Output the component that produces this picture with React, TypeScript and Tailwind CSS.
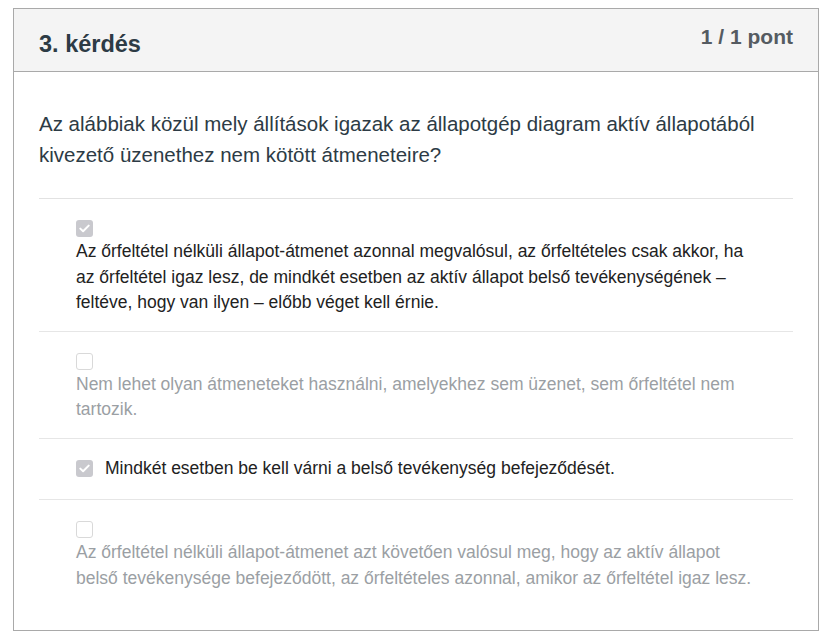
const options = [
  {
    text: 'Az őrfeltétel nélküli állapot-átmenet azonnal megvalósul, az őrfeltételes csak akkor, ha az őrfeltétel igaz lesz, de mindkét esetben az aktív állapot belső tevékenységének – feltéve, hogy van ilyen – előbb véget kell érnie.',
    checked: true,
    inline: false,
  },
  {
    text: 'Nem lehet olyan átmeneteket használni, amelyekhez sem üzenet, sem őrfeltétel nem tartozik.',
    checked: false,
    inline: false,
  },
  {
    text: 'Mindkét esetben be kell várni a belső tevékenység befejeződését.',
    checked: true,
    inline: true,
  },
  {
    text: 'Az őrfeltétel nélküli állapot-átmenet azt követően valósul meg, hogy az aktív állapot belső tevékenysége befejeződött, az őrfeltételes azonnal, amikor az őrfeltétel igaz lesz.',
    checked: false,
    inline: false,
  },
];

function Box({ checked }: { checked: boolean }) {
  if (checked) {
    return (
      <span className="flex h-[17px] w-[17px] shrink-0 items-center justify-center rounded-[3px] bg-[#c9c9ce]">
        <svg width="11" height="9" viewBox="0 0 11 9" fill="none">
          <path d="M1.3 4.6 L4.1 7.3 L9.7 1.6" stroke="#fff" strokeWidth="2" strokeLinecap="round" strokeLinejoin="round" />
        </svg>
      </span>
    );
  }
  return <span className="block h-[17px] w-[17px] shrink-0 rounded-[3px] border border-[#d9d9d9] bg-white" />;
}

export default function App() {
  return (
    <div className="min-h-screen bg-white pl-[13px] pt-[8px] font-['Liberation_Sans',Arial,sans-serif]">
      <div className="w-[806px] border border-[#a9a9a9] bg-white">
        {/* header */}
        <div className="flex items-start justify-between border-b border-[#a9a9a9] bg-[#f4f4f4] px-[25px] pt-[16px] pb-[13px]">
          <h2 className="mt-[5px] text-[23.5px] font-bold leading-[28px] text-[#2d3b45]">3. kérdés</h2>
          <span className="text-[21px] font-bold leading-[24px] text-[#555b61]">1 / 1 pont</span>
        </div>

        <div className="px-[25px] pb-[24px]">
          <p className="pt-[36px] pb-[28px] text-[20.5px] leading-[31px] text-[#2d3b45]">
            Az alábbiak közül mely állítások igazak az állapotgép diagram aktív állapotából kivezető üzenethez nem kötött átmeneteire?
          </p>

          <div className="border-t border-[#e2e2e2]">
            {options.map((o, i) => (
              <div
                key={i}
                className={`px-[37px] text-[17.5px] leading-[25.5px] ${o.checked ? 'text-[#222]' : 'text-[#9b9fa4]'} ${
                  i < options.length - 1 ? 'border-b border-[#e6e6e6]' : ''
                } ${o.inline ? 'flex items-center gap-[12px] pt-[17px] pb-[18px]' : 'pt-[21px] pb-[15px]'}`}
              >
                <Box checked={o.checked} />
                <div className={o.inline ? '' : 'mt-[2px]'}>{o.text}</div>
              </div>
            ))}
          </div>
        </div>
      </div>
    </div>
  );
}
